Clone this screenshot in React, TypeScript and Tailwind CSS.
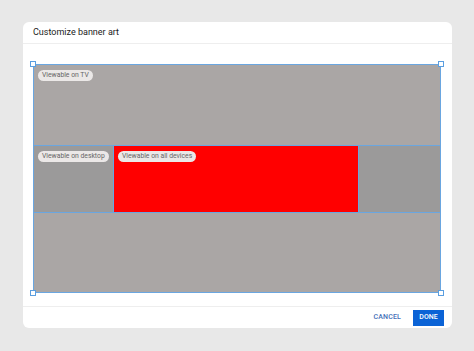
import React from "react";

function Pill({ label }: { label: string }) {
  return (
    <span className="absolute left-[4px] top-[5px] rounded-full bg-[#ebe8e7] px-[4px] py-[1px] text-[6.8px] leading-[9px] text-[#666] whitespace-nowrap">
      {label}
    </span>
  );
}

function Handle({ pos }: { pos: string }) {
  return (
    <span
      className={`absolute h-[6px] w-[6px] border border-[#5a9ee0] bg-white ${pos}`}
    ></span>
  );
}

export default function App() {
  return (
    <div
      className="h-[351px] w-[474px] bg-[#e8e8e8] pl-[23px] pt-[22px]"
      style={{ fontFamily: "Roboto, 'Liberation Sans', sans-serif" }}
    >
      <div className="flex h-[306px] w-[429px] flex-col rounded-[6px] bg-white">
        <div className="flex h-[22px] items-center border-b border-[#eeeeee] pl-[10px] text-[9px] text-[#212121]">
          Customize banner art
        </div>

        <div className="flex flex-1 pl-[10px] pt-[20px]">
          <div className="relative flex h-[229px] w-[408px] flex-col border border-[#6aa6e0]">
            <div className="relative h-[80px] bg-[#aaa6a5]">
              <Pill label="Viewable on TV" />
            </div>
            <div className="flex h-[68px] border-y border-[#6aa6e0]">
              <div className="relative w-[80px] border-r border-[#6aa6e0] bg-[#9b9a9a]">
                <Pill label="Viewable on desktop" />
              </div>
              <div className="relative w-[245px] border-r border-[#6aa6e0] bg-[#ff0000]">
                <Pill label="Viewable on all devices" />
              </div>
              <div className="flex-1 bg-[#9b9a9a]"></div>
            </div>
            <div className="flex-1 bg-[#aaa6a5]"></div>

            <Handle pos="left-[-4px] top-[-4px]" />
            <Handle pos="right-[-4px] top-[-4px]" />
            <Handle pos="left-[-4px] bottom-[-4px]" />
            <Handle pos="right-[-4px] bottom-[-4px]" />
          </div>
        </div>

        <div className="flex h-[22px] items-center justify-end gap-[8px] border-t border-[#eeeeee] pr-[8px]">
          <button className="px-[4px] text-[7px] font-medium tracking-wide text-[#4470b8]">
            CANCEL
          </button>
          <button className="h-[16px] w-[31px] bg-[#0b63d6] text-[7px] font-medium text-white">
            DONE
          </button>
        </div>
      </div>
    </div>
  );
}
